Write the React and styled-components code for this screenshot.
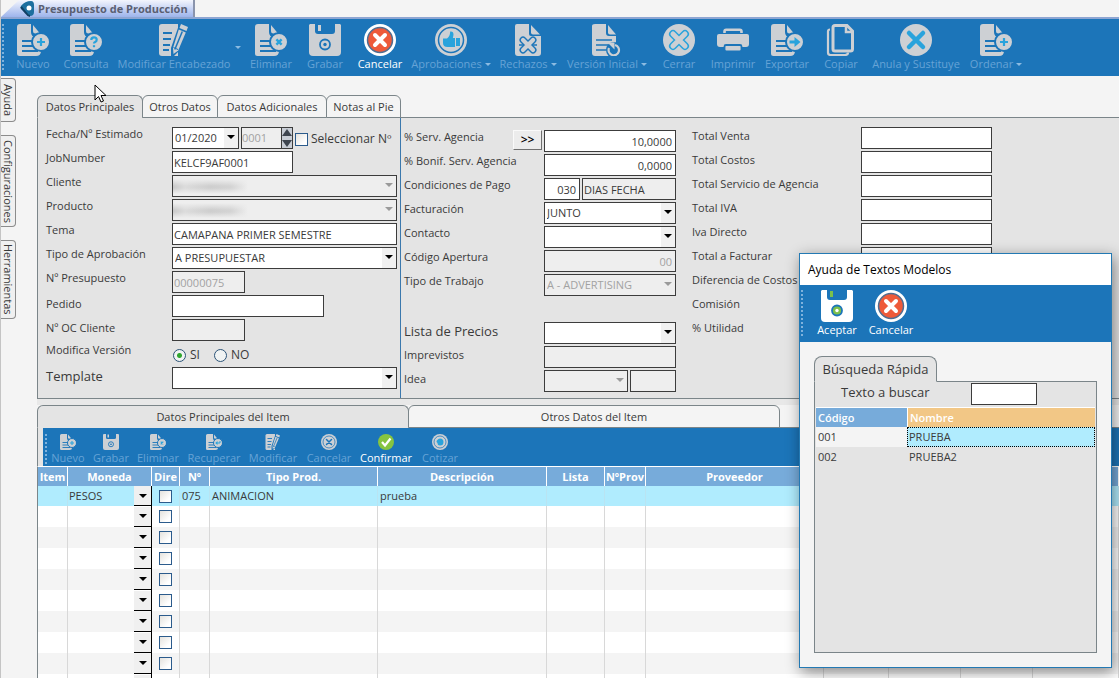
import React, { useState } from 'react'
import styled, { createGlobalStyle, css } from 'styled-components'

const BLUE = '#1c75b9'
const GREY = '#cdd0d4'
const SKY = '#29a3dc'

const GlobalStyle = createGlobalStyle`
  * {
    box-sizing: border-box;
  }
  body {
    margin: 0;
    background: #f4f4f4;
    color: #3a3a3a;
    font-family: "Open Sans", "Noto Sans", sans-serif;
    font-size: 11px;
    line-height: 14px;
  }
  button, input, select {
    font: inherit;
    color: inherit;
    margin: 0;
    padding: 0;
  }
`
const Page = styled.div`
  position: relative;
  height: 100vh;
  overflow: hidden;
  display: flex;
  flex-direction: column;
  border-left: 1px solid #c4c4c4;
`
const WindowTabs = styled.nav`
  flex: none;
  height: 19px;
  border-bottom: 2px solid #8da5d2;
  display: flex;
`
const WindowTab = styled.a`
  display: flex;
  align-items: center;
  gap: 3px;
  width: 194px;
  padding-left: 18px;
  border-right: 2px solid #8a94ac;
  background: linear-gradient(#f3f5fd, #9db4ec);
  clip-path: polygon(18px 0, 100% 0, 100% 100%, 0 100%);
  color: #5a5f72;
  font-weight: 700;
  text-decoration: none;
  white-space: nowrap;

  svg {
    flex: none;
  }
`
const Toolbar = styled.div`
  flex: none;
  display: flex;
  align-items: flex-start;
  height: ${(p) => (p.$small ? 38 : 57)}px;
  padding: ${(p) => (p.$small ? '6px 0 0 2px' : '5px 0 0 1px')};
  background: ${BLUE};
`
const Grip = styled.span`
  flex: none;
  align-self: flex-start;
  width: ${(p) => p.$width}px;
  height: ${(p) => (p.$small ? 30 : 46)}px;
  border-left: 2px dotted #7fb2dc;
`
const ToolButton = styled.button`
  flex: none;
  width: ${(p) => p.$width}px;
  display: flex;
  flex-direction: column;
  align-items: center;
  gap: 1px;
  border: none;
  background: none;
  color: ${(p) => (p.$on ? 'white' : '#66a3d6')};
  white-space: nowrap;
  cursor: pointer;

  svg {
    display: block;
    flex: none;
  }
`
const ToolLabel = styled.span`
  display: flex;
  align-items: center;
  gap: 3px;
`
const Caret = styled.span`
  border: 3px solid transparent;
  border-top-color: #8bbbe2;
  border-bottom: none;
`
const CaretButton = styled.button`
  width: 10px;
  height: 46px;
  border: none;
  background: none;
  display: flex;
  align-items: center;
  justify-content: center;
`
const Body = styled.div`
  flex: 1;
  min-height: 0;
  display: flex;
`
const SideBar = styled.aside`
  flex: none;
  width: 36px;
  padding-top: 2px;
  display: flex;
  flex-direction: column;
  align-items: flex-start;
  gap: 13px;
`
const SideTab = styled.button`
  width: 15px;
  height: ${(p) => p.$height}px;
  border: 1px solid #8c8c8c;
  border-left: none;
  border-radius: 0 4px 4px 0;
  background: #f0f0f0;
  writing-mode: vertical-rl;
  text-align: center;
  line-height: 13px;
`
const Main = styled.main`
  flex: 1;
  min-width: 0;
  display: flex;
  flex-direction: column;
  padding-top: 19px;
`
const TabRow = styled.div`
  flex: none;
  display: flex;
  height: 23px;
`
const Tab = styled.button`
  width: ${(p) => p.$width}px;
  height: 23px;
  margin-right: -1px;
  border: 1px solid #7b8589;
  border-bottom-color: ${(p) => (p.$active ? '#e4e4e4' : '#7b8589')};
  border-radius: 6px 6px 0 0;
  background: ${(p) => (p.$active ? '#e4e4e4' : '#f4f4f4')};
  white-space: nowrap;
`
const TabFill = styled.div`
  flex: 1;
  border-bottom: 1px solid #7b8589;
`
const FormPanel = styled.form`
  flex: none;
  display: flex;
  height: 281px;
  border-left: 1px solid #7b8589;
  border-bottom: 1px solid #7b8589;
  background: #e4e4e4;
`
const Column = styled.div`
  flex: none;
  width: ${(p) => p.$width}px;
  padding: ${(p) => p.$top}px 0 0 ${(p) => p.$left}px;
  border-right: ${(p) => (p.$ruled ? '1px solid #3b78ad' : 'none')};
`
const Row = styled.div`
  display: flex;
  align-items: flex-start;
  gap: 2px;
  height: 24px;
`
const Label = styled.label`
  flex: none;
  width: ${(p) => p.$width}px;
  padding-top: ${(p) => (p.$low ? 2 : 0)}px;
  white-space: nowrap;
  ${(p) => p.$big && css`
    font-size: 13px;
    line-height: 18px;
  `}
`
const TextBox = styled.input`
  width: ${(p) => p.$width}px;
  height: 22px;
  padding: 0 ${(p) => (p.$right ? 3 : 1)}px;
  border: 1px solid #3c3c3c;
  border-radius: 0;
  background: white;
  text-align: ${(p) => (p.$right ? 'right' : 'left')};

  &:disabled {
    background: #eeeeee;
    color: #a2a2a2;
  }
  &:read-only:enabled {
    background: #eeeeee;
  }
`
const SelectBox = styled.span`
  position: relative;
  flex: none;
  width: ${(p) => p.$width}px;
  height: 22px;

  select {
    appearance: none;
    width: 100%;
    height: 22px;
    padding: 0 2px;
    border: 1px solid #3c3c3c;
    border-radius: 0;
    background: linear-gradient(to left, #f1f1f1 14px, white 14px);
    color: #3a3a3a;
    opacity: 1;
  }
  select:disabled {
    background: #eeeeee;
    color: #a2a2a2;
  }
  &::after {
    content: "";
    position: absolute;
    right: 4px;
    top: 8px;
    border: 4px solid transparent;
    border-top-color: ${(p) => (p.$off ? '#9a9a9a' : 'black')};
    border-bottom: none;
    pointer-events: none;
  }
`
const Smudge = styled.span`
  position: absolute;
  left: 1px;
  top: 4px;
  width: 75px;
  height: 15px;
  background:
    linear-gradient(#eeeeee, transparent 7px, transparent 9px, #eeeeee),
    linear-gradient(to right, #cacaca, #dcdcdc 12px, #cecece 38px, #d4d4d4 58px, #eeeeee);
`
const Spinner = styled.span`
  display: flex;
  height: 22px;
  border: 1px solid #3c3c3c;

  input {
    width: 39px;
    border: none;
    background: #eeeeee;
    color: #a2a2a2;
  }
`
const SpinButtons = styled.span`
  display: flex;
  flex-direction: column;
  width: 11px;
  border-left: 1px solid #3c3c3c;
`
const SpinButton = styled.button`
  display: flex;
  flex: 1;
  align-items: center;
  justify-content: center;
  border: none;
  background: #c9ced6;
`
const Check = styled.input`
  appearance: none;
  flex: none;
  width: 13px;
  height: 13px;
  border: 1px solid #2b5b8c;
  background: linear-gradient(135deg, #e4e2dd, white 75%);

  &:checked {
    background: #2b5b8c;
  }
`
const CheckLabel = styled.label`
  display: flex;
  align-items: center;
  gap: 3px;
  height: 24px;
  font-size: 12px;
  white-space: nowrap;
`
const Radio = styled.input`
  appearance: none;
  width: 13px;
  height: 13px;
  border: 1px solid #2b5377;
  border-radius: 50%;
  background: #f0f3f3;

  &:checked {
    background: radial-gradient(#2fa52f 0 2px, #f0f3f3 3px);
  }
`
const RadioLabel = styled.label`
  display: flex;
  align-items: center;
  gap: 4px;
  height: 24px;
  width: 39px;
  padding-left: 1px;
  font-size: 12px;
`
const MoreButton = styled.button`
  width: 29px;
  height: 20px;
  border: 1px solid #fafafa;
  border-right-color: #707070;
  border-bottom-color: #707070;
  background: #ececec;
  color: black;
  font-size: 12px;
  font-weight: 600;
`
const ItemArea = styled.section`
  flex: 1;
  min-height: 0;
  display: flex;
  flex-direction: column;
  border-top: 6px solid #e8e8e8;
`
const ItemTools = styled.div`
  padding-left: 5px;
  border-left: 1px solid #7b8589;
  background: #e4e4e4;
`
const Grid = styled.table`
  width: 100%;
  table-layout: fixed;
  border-collapse: separate;
  border-spacing: 0;
  border-top: 1px solid white;
  border-left: 1px solid #7b8589;

  th {
    height: 19px;
    padding: 0;
    border-right: 1px solid white;
    background: #77abda;
    color: white;
    font-weight: 700;
    white-space: nowrap;
  }
  td {
    height: 21px;
    padding: 0 2px;
    border-right: 1px solid #d8d8d8;
    white-space: nowrap;
  }
  tbody tr {
    background: white;
  }
  tbody tr:nth-child(odd) {
    background: #f4f4f4;
  }
  tbody tr:first-child {
    background: #b0ecfe;
  }
  tbody tr:first-child td {
    height: 20px;
    border-right-color: #b9e4f2;
  }
  tbody tr td:nth-child(2),
  tbody tr:first-child td:nth-child(2) {
    padding: 0;
    border-right-color: black;
  }
  tbody td:nth-child(3) {
    text-align: center;
  }
`
const CoinCell = styled.div`
  display: flex;
  justify-content: space-between;
  align-items: center;
  padding-left: 1px;
`
const DropButton = styled.button`
  display: flex;
  align-items: center;
  justify-content: center;
  width: 17px;
  height: 20px;
  border: none;
  border-bottom: 1px solid black;
  background: #f0f0f0;
`
const DropArrow = styled.span`
  border: 4px solid transparent;
  border-top-color: black;
  border-bottom: none;
`
const CheckCell = styled.div`
  display: flex;
  justify-content: center;
  padding-right: 1px;
`
const Dialog = styled.section`
  position: absolute;
  top: 253px;
  right: 7px;
  width: 313px;
  border: 1px solid #2379b3;
  background: #f4f4f4;
  box-shadow: 2px 4px 14px rgba(0, 0, 0, 0.45);
`
const DialogTitle = styled.h1`
  margin: 0;
  height: 31px;
  padding-left: 8px;
  background: white;
  color: black;
  font-size: 12px;
  font-weight: 400;
  line-height: 31px;
`
const DialogBody = styled.div`
  padding: 14px;
`
const DialogTab = styled.button`
  display: block;
  width: 123px;
  height: 26px;
  margin-bottom: -1px;
  position: relative;
  border: 1px solid #7b8589;
  border-bottom-color: #e4e4e4;
  border-radius: 8px 8px 0 0;
  background: #e4e4e4;
  font-size: 13px;
`
const DialogPanel = styled.div`
  height: 272px;
  padding: 1px 1px 0;
  border: 1px solid #7b8589;
  background: #e4e4e4;
`
const SearchRow = styled.div`
  display: flex;
  height: 24px;
  padding-left: 25px;
`
const Results = styled.table`
  width: 100%;
  table-layout: fixed;
  border-spacing: 0;
  border-top: 1px solid white;

  th {
    height: 19px;
    padding: 0 2px;
    background: #77abda;
    color: white;
    font-weight: 600;
    text-align: left;
  }
  th + th {
    border-left: 1px solid white;
    background: #f2c786;
  }
  td {
    height: 20px;
    padding: 0 2px;
  }
  tbody tr:first-child td {
    background: #f4f4f4;
  }
  tbody tr:first-child td + td {
    padding: 0 1px;
    border: 1px dotted black;
    background: #b0ecfe;
  }
`
const Cursor = styled.svg`
  position: absolute;
  left: 93px;
  top: 84px;
  pointer-events: none;
`

const badges = {
  plus: <path d="M24 14v8M20 18h8" stroke={SKY} strokeWidth="2.2" />,
  cross: <path d="M21.4 15.4l5.2 5.2M26.6 15.4l-5.2 5.2" stroke={SKY} strokeWidth="2.4" />,
  arrow: <path d="M18.5 16.500h5v-3.500l6 5-6 5v-3.500h-5z" fill={SKY} />,
  ask: (
    <g fill="none" stroke={SKY} strokeWidth="2.2">
      <path d="M21.3 16q0-2.600 2.700-2.600t2.700 2.400q0 1.500-1.500 2.200-1.200.6-1.200 1.600" />
      <path d="M24 21.200v2" />
    </g>
  ),
  back: (
    <g>
      <path d="M28 14v4h-6" fill="none" stroke={SKY} strokeWidth="2" />
      <path d="M18.500 18l4.500-4v8z" fill={SKY} />
    </g>
  ),
}

function Icon({ size, children }) {
  return <svg width={size} height={size} viewBox="0 0 32 32" fill="none" aria-hidden="true">{children}</svg>
}

function DocIcon({ size = 32, badge }) {
  return (
    <Icon size={size}>
      <path d="M3 0h11v8q0 5 5 5h5v14q0 5-5 5H2.500Q0 32 0 29.500V3q0-3 3-3z" fill={GREY} />
      <path d="M16 1l7 8.500h-4.500q-2.500 0-2.500-2.500z" fill={GREY} />
      <path d="M5 17h12M5 22h13M5 27h16" stroke={BLUE} strokeWidth="1.8" />
      <circle cx="24" cy="18" r="9" fill={GREY} stroke={BLUE} strokeWidth="2" />
      {badges[badge]}
    </Icon>
  )
}

function EditIcon({ size = 32 }) {
  return (
    <Icon size={size}>
      <path d="M4 0h16v32H4q-3 0-3-3V3q0-3 3-3z" fill={GREY} />
      <path d="M5 9h9M5 15h8M5 21h7M5 26h6" stroke={BLUE} strokeWidth="1.8" />
      <path d="M22-2l9 4-11 26-7 7V24z" fill={BLUE} />
      <path d="M23 0l7 3-1.500 4-7-3z" fill={GREY} />
      <path d="M20.800 5.500l7 3-7.600 18-4.700 3.500-.5-6z" fill={GREY} />
      <path d="M24.300 7.500l-7.500 18" stroke={BLUE} strokeWidth="1.5" />
      <path d="M15.500 23.500l4.500 2" stroke={BLUE} />
    </Icon>
  )
}

function SaveIcon({ size = 32, fill = GREY, accent = GREY }) {
  return (
    <Icon size={size}>
      <path d="M1 0h30l1 1v27q0 4-4 4H4q-4 0-4-4V1z" fill={fill} />
      <path d="M6 0h20v7q0 3-3 3H9q-3 0-3-3z" fill={BLUE} />
      <path d="M9 1h3v6H9z" fill={accent} />
      <circle cx="16" cy="20.5" r="5" fill={accent} stroke={BLUE} strokeWidth="1.8" />
      <circle cx="16" cy="20.5" r="1.7" fill={accent === GREY ? BLUE : 'white'} />
    </Icon>
  )
}

function CancelIcon({ size = 32 }) {
  return (
    <Icon size={size}>
      <circle cx="16" cy="16" r="16" fill="white" />
      <circle cx="16" cy="16" r="12.5" fill="#ee5a3a" stroke="#4f6d92" strokeWidth="1.5" />
      <path d="M11 11l10 10M21 11L11 21" stroke="white" strokeWidth="4" strokeLinecap="round" />
    </Icon>
  )
}

function ThumbIcon() {
  return (
    <Icon size={32}>
      <circle cx="16" cy="16" r="16" fill={GREY} />
      <circle cx="16" cy="16" r="12.5" stroke={BLUE} strokeWidth="1.5" />
      <path d="M8 14.500h4q3-2 3.200-7 3.300-.5 3.300 3.200l-.6 3.300H20v9H12.500Q8 23 8 19z" fill={SKY} />
      <path d="M21 14h4v8h-4z" fill={SKY} />
    </Icon>
  )
}

function RejectIcon() {
  return (
    <Icon size={32}>
      <path d="M5 0h12v10q0 2 2 2h10v17q0 3-3 3H6q-3 0-3-3V2q0-2 2-2z" fill={GREY} />
      <path d="M19 1l9 9.500h-7q-2 0-2-2z" fill={GREY} />
      <path d="M11 16l10 10M21 16L11 26" stroke={BLUE} strokeWidth="7" strokeLinecap="round" />
      <path d="M11 16l10 10M21 16L11 26" stroke={GREY} strokeWidth="4.2" strokeLinecap="round" />
      <path d="M7 21h5M20 21h5" stroke={BLUE} strokeWidth="1.5" />
    </Icon>
  )
}

function VersionIcon() {
  return (
    <Icon size={32}>
      <path d="M4 0h11v9q0 3 3 3h7v20H4q-3 0-3-3V2q0-2 3-2z" fill={GREY} />
      <path d="M17 1l8 9.500h-6q-2 0-2-2z" fill={GREY} />
      <path d="M5 16h16M5 21h12M5 26h10" stroke={BLUE} strokeWidth="1.7" />
      <circle cx="23" cy="26" r="8" fill={BLUE} />
      <path d="M18 24a5.200 5.200 0 1 0 6-3" stroke={GREY} strokeWidth="2.2" />
      <path d="M16.500 18.500h7v7z" fill={GREY} />
    </Icon>
  )
}

function CloseIcon() {
  return (
    <Icon size={32}>
      <circle cx="16" cy="16" r="16" fill={GREY} />
      <path d="M10 10l12 12M22 10L10 22" stroke={SKY} strokeWidth="8" strokeLinecap="round" />
      <path d="M10 10l12 12M22 10L10 22" stroke={GREY} strokeWidth="5" strokeLinecap="round" />
    </Icon>
  )
}

function VoidIcon() {
  return (
    <Icon size={32}>
      <circle cx="16" cy="16" r="16" fill={GREY} />
      <path d="M9 9l14 14M23 9L9 23" stroke={SKY} strokeWidth="4.5" strokeLinecap="round" />
    </Icon>
  )
}

function PrintIcon() {
  return (
    <Icon size={32}>
      <path d="M7.500 9V7.500q0-1.700 1.700-1.700h13.600q1.700 0 1.700 1.700V9" stroke={GREY} strokeWidth="2.6" />
      <path d="M2 10h28q2 0 2 2v8q0 3-3 3H3q-3 0-3-3v-8q0-2 2-2z" fill={GREY} />
      <path d="M9 21h14q1.500 0 1.500 1.500v3q0 2-2 2h-13q-2 0-2-2v-3Q7.500 21 9 21z" fill={GREY} stroke={BLUE} strokeWidth="1.8" />
    </Icon>
  )
}

function CopyIcon() {
  return (
    <Icon size={32}>
      <path d="M5 5.500q-2 0-2 2v21q0 2.500 2.500 2.500H20q3 0 3-2.500" stroke={GREY} strokeWidth="2.2" />
      <path d="M10 1.500h12l5.500 5.500V25q0 2-2 2h-15.500q-2 0-2-2V3.500q0-2 2-2z" stroke={GREY} strokeWidth="3" />
      <path d="M21 2v6h6" stroke={GREY} strokeWidth="2.5" />
    </Icon>
  )
}

function RingIcon({ cross }) {
  return (
    <Icon size={16}>
      <circle cx="16" cy="16" r="16" fill={GREY} />
      <circle cx="16" cy="16" r="12" stroke={BLUE} strokeWidth="1.5" />
      {cross
        ? <path d="M11 11l10 10M21 11L11 21" stroke={BLUE} strokeWidth="3" strokeLinecap="round" />
        : <path d="M9 16q0-5 7-7 7 0 7 7t-7 7q-5 0-5-5z" fill={SKY} />}
    </Icon>
  )
}

function OkIcon() {
  return (
    <Icon size={16}>
      <circle cx="16" cy="16" r="16" fill="#86c440" />
      <path d="M8 16l6 7L25 9" stroke="white" strokeWidth="4.5" />
    </Icon>
  )
}

function SpinArrow({ down }) {
  return (
    <svg width="10" height="8" viewBox="0 0 10 8" aria-hidden="true">
      <path d={down ? 'M0 1h10L5 8z' : 'M0 7h10L5 0z'} fill="#3f4650" />
    </svg>
  )
}

const mainTools = [
  { text: 'Nuevo', width: 48, icon: <DocIcon badge="plus" /> },
  { text: 'Consulta', width: 58, icon: <DocIcon badge="ask" /> },
  { text: 'Modificar Encabezado', width: 118, icon: <EditIcon />, split: true },
  { text: 'Eliminar', width: 56, icon: <DocIcon badge="cross" /> },
  { text: 'Grabar', width: 52, icon: <SaveIcon /> },
  { text: 'Cancelar', width: 58, icon: <CancelIcon />, on: true },
  { text: 'Aprobaciones', width: 84, icon: <ThumbIcon />, menu: true },
  { text: 'Rechazos', width: 70, icon: <RejectIcon />, menu: true },
  { text: 'Versión Inicial', width: 88, icon: <VersionIcon />, menu: true },
  { text: 'Cerrar', width: 56, icon: <CloseIcon /> },
  { text: 'Imprimir', width: 52, icon: <PrintIcon /> },
  { text: 'Exportar', width: 56, icon: <DocIcon badge="arrow" /> },
  { text: 'Copiar', width: 52, icon: <CopyIcon /> },
  { text: 'Anula y Sustituye', width: 98, icon: <VoidIcon /> },
  { text: 'Ordenar', width: 62, icon: <DocIcon badge="plus" />, menu: true },
]

const itemTools = [
  { text: 'Nuevo', width: 42, icon: <DocIcon size={16} badge="plus" /> },
  { text: 'Grabar', width: 44, icon: <SaveIcon size={16} /> },
  { text: 'Eliminar', width: 50, icon: <DocIcon size={16} badge="cross" /> },
  { text: 'Recuperar', width: 62, icon: <DocIcon size={16} badge="back" /> },
  { text: 'Modificar', width: 56, icon: <EditIcon size={16} /> },
  { text: 'Cancelar', width: 56, icon: <RingIcon cross /> },
  { text: 'Confirmar', width: 58, icon: <OkIcon />, on: true },
  { text: 'Cotizar', width: 50, icon: <RingIcon /> },
]

const dialogTools = [
  { text: 'Aceptar', width: 54, icon: <SaveIcon fill="white" accent="#7cc04b" />, on: true },
  { text: 'Cancelar', width: 54, icon: <CancelIcon />, on: true },
]

const totals = [
  'Total Venta', 'Total Costos', 'Total Servicio de Agencia', 'Total IVA', 'Iva Directo',
  'Total a Facturar', 'Diferencia de Costos', 'Comisión', '% Utilidad',
]

const columns = [
  { title: 'Item', width: 30 },
  { title: 'Moneda', width: 84 },
  { title: 'Dire', width: 28 },
  { title: 'Nº', width: 30 },
  { title: 'Tipo Prod.', width: 168 },
  { title: 'Descripción', width: 169 },
  { title: 'Lista', width: 58 },
  { title: 'NºProv', width: 41 },
  { title: 'Proveedor', width: 178 },
  { title: '', width: 65 },
  { title: '', width: 72 },
  { title: '', width: 72 },
  { title: '' },
]

const items = [
  { coin: 'PESOS', number: '075', type: 'ANIMACION', description: 'prueba' },
  ...Array.from({ length: 9 }, () => ({})),
]

function Tools({ tools }) {
  return tools.map((tool) => (
    <React.Fragment key={tool.text}>
      <ToolButton type="button" $width={tool.width} $on={tool.on}>
        {tool.icon}
        <ToolLabel>{tool.text}{tool.menu && <Caret />}</ToolLabel>
      </ToolButton>
      {tool.split && <CaretButton type="button" aria-label="Más opciones"><Caret /></CaretButton>}
    </React.Fragment>
  ))
}

function Combo({ id, width, value = '', disabled, label, children }) {
  return (
    <SelectBox $width={width} $off={disabled}>
      <select id={id} aria-label={label} disabled={disabled} defaultValue={value}>
        <option value={value}>{value}</option>
      </select>
      {children}
    </SelectBox>
  )
}

export default function App() {

  const [version, setVersion] = useState('SI')
  const [search, setSearch] = useState('')

  return (
    <Page>
      <GlobalStyle />
      <WindowTabs>
        <WindowTab href="#presupuesto">
          <svg width="16" height="16" viewBox="0 0 16 16" aria-hidden="true">
            <path d="M2 5Q6 0 12 0q3 0 3 4v7q0 4-4 4-2 0-4-3L2 8Q1 6 2 5z" fill="#1d6f9f" />
            <path d="M2 6l5 6q2 3 4 3" stroke="#123f63" strokeWidth="2" fill="none" />
            <circle cx="10" cy="7" r="2.5" fill="white" />
          </svg>
          Presupuesto de Producción
        </WindowTab>
      </WindowTabs>
      <Toolbar>
        <Grip $width={7} />
        <Tools tools={mainTools} />
      </Toolbar>

      <Body>
        <SideBar>
          <SideTab type="button" $height={44}>Ayuda</SideTab>
          <SideTab type="button" $height={92}>Configuraciones</SideTab>
          <SideTab type="button" $height={79}>Herramientas</SideTab>
        </SideBar>

        <Main>
          <TabRow>
            <Tab type="button" $width={106} $active>Datos Principales</Tab>
            <Tab type="button" $width={76}>Otros Datos</Tab>
            <Tab type="button" $width={110}>Datos Adicionales</Tab>
            <Tab type="button" $width={75}>Notas al Pie</Tab>
            <TabFill />
          </TabRow>

          <FormPanel>
            <Column $width={363} $top={9} $left={8} $ruled>
              <Row>
                <Label $width={124} htmlFor="fecha">Fecha/Nº Estimado</Label>
                <Combo id="fecha" width={67} value="01/2020" />
                <Spinner>
                  <input aria-label="Nº Estimado" defaultValue="0001" disabled />
                  <SpinButtons>
                    <SpinButton type="button" aria-label="Subir"><SpinArrow /></SpinButton>
                    <SpinButton type="button" aria-label="Bajar"><SpinArrow down /></SpinButton>
                  </SpinButtons>
                </Spinner>
                <CheckLabel><Check type="checkbox" />Seleccionar Nº</CheckLabel>
              </Row>
              <Row>
                <Label $width={124} htmlFor="job">JobNumber</Label>
                <TextBox id="job" $width={121} defaultValue="KELCF9AF0001" />
              </Row>
              <Row>
                <Label $width={124} htmlFor="cliente">Cliente</Label>
                <Combo id="cliente" width={225} disabled><Smudge /></Combo>
              </Row>
              <Row>
                <Label $width={124} htmlFor="producto">Producto</Label>
                <Combo id="producto" width={225} disabled><Smudge /></Combo>
              </Row>
              <Row>
                <Label $width={124} htmlFor="tema">Tema</Label>
                <TextBox id="tema" $width={225} defaultValue="CAMAPANA PRIMER SEMESTRE" />
              </Row>
              <Row>
                <Label $width={124} htmlFor="aprobacion">Tipo de Aprobación</Label>
                <Combo id="aprobacion" width={225} value="A PRESUPUESTAR" />
              </Row>
              <Row>
                <Label $width={124} htmlFor="presupuesto">Nº Presupuesto</Label>
                <TextBox id="presupuesto" $width={73} defaultValue="00000075" disabled />
              </Row>
              <Row>
                <Label $width={124} $low htmlFor="pedido">Pedido</Label>
                <TextBox id="pedido" $width={152} />
              </Row>
              <Row>
                <Label $width={124} $low htmlFor="oc">Nº OC Cliente</Label>
                <TextBox id="oc" $width={73} disabled />
              </Row>
              <Row>
                <Label as="span" $width={124}>Modifica Versión</Label>
                {['SI', 'NO'].map((option) => (
                  <RadioLabel key={option}>
                    <Radio
                      type="radio"
                      name="version"
                      checked={version === option}
                      onChange={() => setVersion(option)}
                    />
                    {option}
                  </RadioLabel>
                ))}
              </Row>
              <Row>
                <Label $width={124} $big htmlFor="template">Template</Label>
                <Combo id="template" width={225} />
              </Row>
            </Column>

            <Column $width={275} $top={12} $left={3}>
              <Row>
                <Label $width={107} htmlFor="agencia">% Serv. Agencia</Label>
                <MoreButton type="button">&gt;&gt;</MoreButton>
                <TextBox id="agencia" $width={132} $right defaultValue="10,0000" />
              </Row>
              <Row>
                <Label $width={138} htmlFor="bonif">% Bonif. Serv. Agencia</Label>
                <TextBox id="bonif" $width={132} $right defaultValue="0,0000" />
              </Row>
              <Row>
                <Label $width={138} htmlFor="pago">Condiciones de Pago</Label>
                <TextBox id="pago" $width={36} $right defaultValue="030" />
                <TextBox aria-label="Detalle" $width={94} defaultValue="DIAS FECHA" readOnly />
              </Row>
              <Row>
                <Label $width={138} htmlFor="facturacion">Facturación</Label>
                <Combo id="facturacion" width={132} value="JUNTO" />
              </Row>
              <Row>
                <Label $width={138} htmlFor="contacto">Contacto</Label>
                <Combo id="contacto" width={132} />
              </Row>
              <Row>
                <Label $width={138} htmlFor="apertura">Código Apertura</Label>
                <TextBox id="apertura" $width={132} $right defaultValue="00" disabled />
              </Row>
              <Row>
                <Label $width={138} htmlFor="trabajo">Tipo de Trabajo</Label>
                <Combo id="trabajo" width={132} value="A - ADVERTISING" disabled />
              </Row>
              <Row />
              <Row>
                <Label $width={138} $big htmlFor="precios">Lista de Precios</Label>
                <Combo id="precios" width={132} />
              </Row>
              <Row>
                <Label $width={138} $low htmlFor="imprevistos">Imprevistos</Label>
                <TextBox id="imprevistos" $width={132} disabled />
              </Row>
              <Row>
                <Label $width={138} $low htmlFor="idea">Idea</Label>
                <Combo id="idea" width={84} disabled />
                <TextBox aria-label="Idea detalle" $width={46} disabled />
              </Row>
            </Column>

            <Column $width={320} $top={9} $left={16}>
              {totals.map((text) => (
                <Row key={text}>
                  <Label $width={167} $low htmlFor={text}>{text}</Label>
                  <TextBox id={text} $width={131} />
                </Row>
              ))}
            </Column>
          </FormPanel>

          <ItemArea>
            <TabRow>
              <Tab type="button" $width={372} $active>Datos Principales del Item</Tab>
              <Tab type="button" $width={372}>Otros Datos del Item</Tab>
              <TabFill />
            </TabRow>
            <ItemTools>
              <Toolbar $small>
                <Grip $small $width={2} />
                <Tools tools={itemTools} />
              </Toolbar>
            </ItemTools>
            <Grid>
              <colgroup>
                {columns.map((column, i) => <col key={i} width={column.width} />)}
              </colgroup>
              <thead>
                <tr>
                  {columns.map((column, i) => <th key={i}>{column.title}</th>)}
                </tr>
              </thead>
              <tbody>
                {items.map((item, i) => (
                  <tr key={i}>
                    <td />
                    <td>
                      <CoinCell>
                        {item.coin || <span />}
                        <DropButton type="button" aria-label="Moneda"><DropArrow /></DropButton>
                      </CoinCell>
                    </td>
                    <td>
                      <CheckCell><Check type="checkbox" aria-label="Dire" /></CheckCell>
                    </td>
                    <td>{item.number}</td>
                    <td>{item.type}</td>
                    <td>{item.description}</td>
                    {columns.slice(6).map((column, n) => <td key={n} />)}
                  </tr>
                ))}
              </tbody>
            </Grid>
          </ItemArea>
        </Main>
      </Body>

      <Dialog role="dialog" aria-labelledby="dialog-title">
        <DialogTitle id="dialog-title">Ayuda de Textos Modelos</DialogTitle>
        <Toolbar>
          <Grip $width={9} />
          <Tools tools={dialogTools} />
        </Toolbar>
        <DialogBody>
          <DialogTab type="button">Búsqueda Rápida</DialogTab>
          <DialogPanel>
            <SearchRow>
              <Label $width={130} $big htmlFor="buscar">Texto a buscar</Label>
              <TextBox
                id="buscar"
                $width={66}
                value={search}
                onChange={(e) => setSearch(e.target.value)}
              />
            </SearchRow>
            <Results>
              <colgroup>
                <col width="91" />
                <col />
              </colgroup>
              <thead>
                <tr><th>Código</th><th>Nombre</th></tr>
              </thead>
              <tbody>
                <tr><td>001</td><td>PRUEBA</td></tr>
                <tr><td>002</td><td>PRUEBA2</td></tr>
              </tbody>
            </Results>
          </DialogPanel>
        </DialogBody>
      </Dialog>

      <Cursor width="14" height="20" viewBox="0 0 14 20" aria-hidden="true">
        <path d="M1 1v15l3.500-3.500L7 18l2.500-1-2.500-5.500h5z" fill="white" stroke="black" />
      </Cursor>
    </Page>
  )
}
